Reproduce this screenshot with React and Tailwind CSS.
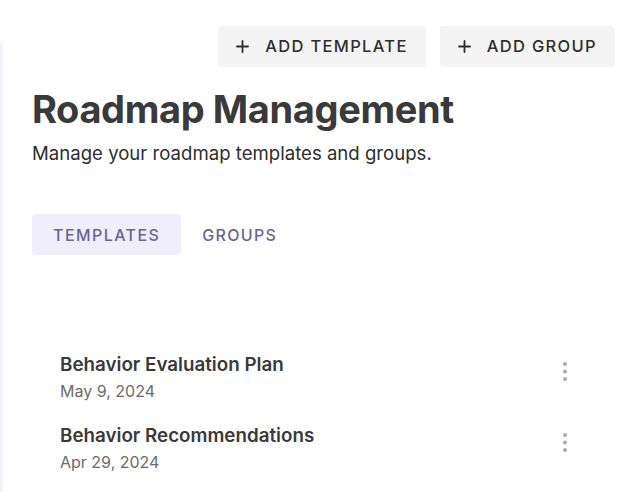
const templates = [
    { name: 'Behavior Evaluation Plan', date: 'May 9, 2024' },
    { name: 'Behavior Recommendations', date: 'Apr 29, 2024' },
]

function PlusIcon() {
    return (
        <svg width="13" height="13" viewBox="0 0 13 13" stroke="currentColor" strokeWidth="1.8" strokeLinecap="round">
            <path d="M6.5 1v11M1 6.5h11" />
        </svg>
    )
}

function KebabIcon() {
    return (
        <svg width="6" height="19" viewBox="0 0 6 19" fill="#ababab">
            <circle cx="3" cy="2" r="2" />
            <circle cx="3" cy="9.5" r="2" />
            <circle cx="3" cy="17" r="2" />
        </svg>
    )
}

export default function App() {
    return (
        <div className="flex min-h-screen bg-white" style={{ fontFamily: 'Inter, "Noto Sans", sans-serif' }}>
            <div className="mt-[43px] w-[3px] shrink-0 bg-[#f1f5fa]" />
            <div className="flex-1 pl-[29px] pr-[25px]">
                <div className="flex justify-end gap-[14px] pt-[26px]">
                    <button className="flex h-[41px] items-center gap-[16px] rounded-[4px] bg-[#f4f4f4] px-[18px] text-[16.5px] font-medium tracking-[0.08em] text-[#2e2e2e]">
                        <PlusIcon />
                        ADD TEMPLATE
                    </button>
                    <button className="flex h-[41px] items-center gap-[16px] rounded-[4px] bg-[#f4f4f4] px-[18px] text-[16.5px] font-medium tracking-[0.08em] text-[#2e2e2e]">
                        <PlusIcon />
                        ADD GROUP
                    </button>
                </div>

                <h1 className="mt-[19px] text-[38px] font-bold leading-[46px] tracking-[-0.01em] text-[#3a3a3a]">Roadmap Management</h1>
                <p className="mt-[9px] text-[18.6px] leading-[24px] text-[#2e2e2e]">Manage your roadmap templates and groups.</p>

                <div className="mt-[49px] flex">
                    <button className="h-[41px] rounded-[4px] bg-[#f0eefc] px-[21px] text-[16px] font-medium tracking-[0.09em] text-[#66659a]">TEMPLATES</button>
                    <button className="h-[41px] rounded-[4px] px-[21px] text-[16px] font-medium tracking-[0.08em] text-[#66659a]">GROUPS</button>
                </div>

                <ul className="mt-[97px] flex flex-col gap-[19px] pl-[28px] pr-[47px]">
                    {templates.map((t) => (
                        <li key={t.name} className="flex items-start justify-between">
                            <div>
                                <div className="text-[18.8px] font-semibold leading-[26px] text-[#3a3a3a]">{t.name}</div>
                                <div className="text-[16px] leading-[26px] text-[#6b6b6b]">{t.date}</div>
                            </div>
                            <div className="mt-[10px]">
                                <KebabIcon />
                            </div>
                        </li>
                    ))}
                </ul>
            </div>
        </div>
    )
}
